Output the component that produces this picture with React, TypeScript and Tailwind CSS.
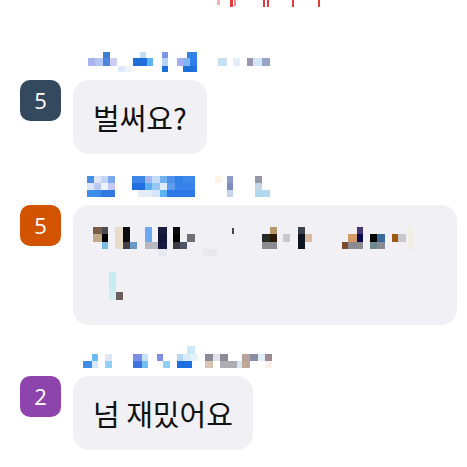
type Cell = [number, number, number, number, string];

const topMarks: Cell[] = [
  [217, 0, 3, 5, '#f3b0b0'],
  [230, 0, 3, 7, '#e03a3a'],
  [234, 0, 2, 6, '#eb8a8a'],
  [263, 0, 2, 7, '#e03a3a'],
  [267, 0, 2, 7, '#e03a3a'],
  [292, 0, 2, 7, '#e03a3a'],
  [318, 0, 2, 7, '#e03a3a'],
];

const name1: Cell[] = [
  [103, 52, 7, 6, '#3b7fd9'], [140, 52, 6, 6, '#c5dcf5'], [162, 52, 6, 6, '#7b96e6'], [187, 52, 10, 6, '#3282e8'],
  [88, 58, 7, 8, '#a9b3ee'], [95, 58, 8, 8, '#b4c6f3'], [103, 58, 7, 8, '#4f86da'], [110, 58, 7, 8, '#cdcdf3'],
  [133, 58, 14, 8, '#1f6fda'], [147, 58, 6, 8, '#5db3f2'], [162, 58, 6, 8, '#b9d3f2'], [177, 58, 6, 8, '#a3acf0'],
  [183, 58, 7, 8, '#7fb5f2'], [190, 58, 7, 8, '#2f7fea'], [218, 58, 9, 8, '#c6e0ef'], [233, 58, 7, 8, '#e2eff8'],
  [247, 58, 6, 8, '#9b97b2'], [253, 58, 9, 8, '#d4e6f6'], [262, 58, 8, 8, '#97a3c9'],
  [118, 66, 7, 6, '#dfe9fb'], [125, 66, 7, 6, '#f0f5fc'], [162, 66, 6, 6, '#1f6fda'], [183, 66, 14, 6, '#1f6fda'],
];

const name2: Cell[] = [
  [87, 176, 7, 7, '#4a90e2'], [94, 176, 7, 7, '#dfe6f7'], [101, 176, 7, 7, '#c0d4f5'], [108, 176, 7, 7, '#7aa8ea'],
  [132, 176, 13, 7, '#3f85e6'], [145, 176, 7, 7, '#a8b6ee'], [152, 176, 8, 7, '#c4dcf5'], [160, 176, 7, 7, '#6fb0f0'],
  [167, 176, 8, 7, '#4e90ea'], [175, 176, 8, 7, '#2d83ea'], [183, 176, 12, 7, '#3e8aeb'], [215, 176, 7, 7, '#fdf6e3'],
  [227, 176, 6, 7, '#8c9bc8'], [255, 176, 7, 7, '#9499a5'],
  [87, 183, 7, 7, '#dde6f7'], [94, 183, 7, 7, '#b9c9f0'], [101, 183, 7, 7, '#eef2fa'], [108, 183, 7, 7, '#c5c8f2'],
  [132, 183, 13, 7, '#2170e0'], [145, 183, 7, 7, '#5bb1f2'], [152, 183, 8, 7, '#95c8f2'], [160, 183, 7, 7, '#e0eaf8'],
  [167, 183, 8, 7, '#5e9cec'], [175, 183, 20, 7, '#3583eb'], [227, 183, 6, 7, '#7d8fbe'], [255, 183, 7, 7, '#c5d5e8'],
  [87, 190, 14, 7, '#3c8de8'], [101, 190, 14, 7, '#2f78e0'], [138, 190, 14, 7, '#e4ecf8'], [152, 190, 8, 7, '#d6e6fa'],
  [160, 190, 7, 7, '#5ab5f2'], [167, 190, 28, 7, '#2c78e6'], [227, 190, 6, 7, '#c7d5ea'], [255, 190, 15, 7, '#b0d8f0'],
];

const name3: Cell[] = [
  [187, 343, 8, 8, '#cde9f8'],
  [92, 351, 6, 7, '#6cbcf0'], [105, 351, 7, 7, '#e0e4f5'], [133, 351, 9, 7, '#7c8ee6'], [142, 351, 6, 7, '#c6e4f8'],
  [157, 351, 6, 7, '#7c8ee6'], [177, 351, 6, 7, '#b5d6f5'], [183, 351, 8, 7, '#d8ecfa'], [191, 351, 7, 7, '#e4f2fa'],
  [205, 351, 8, 7, '#8a8a98'], [213, 351, 7, 7, '#e0e2ea'], [220, 351, 8, 7, '#8d8a96'], [242, 351, 8, 7, '#b8a49c'],
  [250, 351, 8, 7, '#8c8ca8'], [258, 351, 7, 7, '#e0eefa'], [265, 351, 7, 7, '#9e8c95'],
  [83, 358, 9, 8, '#3f8de6'], [92, 358, 6, 8, '#d0e8f8'], [105, 358, 7, 8, '#8fd0f5'], [133, 358, 9, 8, '#3f75e0'],
  [142, 358, 6, 8, '#6fbff0'], [163, 358, 7, 8, '#8fd0f5'], [177, 358, 15, 8, '#1c6fe0'], [205, 358, 8, 8, '#d6c5b0'],
  [220, 358, 17, 8, '#acacb2'], [237, 358, 5, 8, '#d8e4f0'], [242, 358, 8, 8, '#c0a898'], [265, 358, 7, 8, '#fdf0ec'],
];

const blurred: Cell[] = [
  [93, 225, 9, 7, '#7a5c48'], [102, 225, 6, 7, '#4a4a50'], [115, 225, 8, 7, '#e8dccc'], [123, 225, 7, 7, '#0a0a0a'],
  [145, 225, 7, 7, '#6aa8f0'], [158, 225, 9, 7, '#1a1a3a'], [173, 225, 7, 7, '#0a0a0a'], [232, 226, 1.5, 6, '#444444'],
  [270, 225, 7, 7, '#b89868'], [298, 225, 7, 7, '#3a4048'], [357, 225, 6, 7, '#453875'], [408, 225, 5, 7, '#f0f0e0'],
  [93, 232, 9, 8, '#c2a888'], [102, 232, 6, 8, '#000000'], [115, 232, 8, 8, '#e8dccc'], [123, 232, 7, 8, '#0a0a0a'],
  [145, 232, 7, 8, '#6aa8f0'], [158, 232, 9, 8, '#141438'], [173, 232, 7, 8, '#000000'], [187, 232, 8, 8, '#707074'],
  [262, 232, 8, 8, '#2a2a2a'], [270, 232, 7, 8, '#2a1a0a'], [283, 232, 7, 8, '#c8c8cc'], [298, 232, 7, 8, '#0c1420'],
  [305, 232, 7, 8, '#d8b8a0'], [348, 232, 9, 8, '#d49a68'], [357, 232, 6, 8, '#0a0a50'], [370, 232, 7, 8, '#000000'],
  [377, 232, 8, 8, '#3a6a9a'], [392, 232, 6, 8, '#a05a10'], [398, 232, 8, 8, '#c8c8cc'], [408, 232, 5, 8, '#f0f0e0'],
  [102, 240, 6, 7, '#7abce0'], [115, 240, 8, 7, '#e8dccc'], [123, 240, 7, 7, '#404048'], [130, 240, 7, 7, '#6a98c0'],
  [145, 240, 13, 7, '#b8b8c0'], [158, 240, 9, 7, '#1a1a40'], [173, 240, 7, 7, '#3a3a40'], [180, 240, 7, 7, '#4a5868'],
  [262, 240, 15, 7, '#8c8c90'], [298, 240, 7, 7, '#0c1420'], [342, 240, 6, 7, '#7a4a2a'], [348, 240, 15, 7, '#8a8a90'],
  [370, 240, 7, 7, '#708890'], [377, 240, 8, 7, '#8a8a90'], [408, 240, 5, 7, '#f0f0e0'],
  [158, 247, 9, 7, '#e8e8f0'], [203, 247, 14, 7, '#e8e8ee'],
  [109, 270, 7, 20, '#c8ecf0'], [109, 290, 7, 8, '#d0eef0'], [116, 290, 7, 8, '#6a6060'],
];

function Mosaic({ cells, x, y, w, h }: { cells: Cell[]; x: number; y: number; w: number; h: number }) {
  return (
    <svg width={w} height={h} viewBox={`${x} ${y} ${w} ${h}`} className="block" shapeRendering="crispEdges">
      {cells.map(([cx, cy, cw, ch, fill], i) => (
        <rect key={i} x={cx} y={cy} width={cw} height={ch} fill={fill} />
      ))}
    </svg>
  );
}

function Message({
  avatar,
  color,
  name,
  nameTop,
  children,
}: {
  avatar: string;
  color: string;
  name: Cell[];
  nameTop: number;
  children: React.ReactNode;
}) {
  return (
    <div className="grid grid-cols-[41px_1fr] gap-x-3 gap-y-2">
      <div className="col-start-2">
        <Mosaic cells={name} x={73} y={nameTop} w={210} h={22} />
      </div>
      <div
        className={`col-start-1 row-start-2 w-[41px] h-[41px] rounded-[10px] flex items-center justify-center text-white text-[22px] ${color}`}
        style={{ fontFamily: '"Open Sans", sans-serif' }}
      >
        {avatar}
      </div>
      <div className="col-start-2 row-start-2 justify-self-start max-w-[384px] bg-[#f0f0f5] rounded-[16px] px-5 py-[14px] text-[29px] leading-[46px] text-[#111]">
        {children}
      </div>
    </div>
  );
}

export default function App() {
  return (
    <div
      className="w-[467px] h-[467px] bg-white overflow-hidden"
      style={{ fontFamily: '"Noto Sans CJK KR", "Noto Sans", sans-serif' }}
    >
      <Mosaic cells={topMarks} x={0} y={0} w={467} h={8} />
      <div className="mt-[42px] pl-5 pr-[10px] flex flex-col gap-[21px]">
        <Message avatar="5" color="bg-[#34495e]" name={name1} nameTop={50}>
          벌써요?
        </Message>
        <Message avatar="5" color="bg-[#d35400]" name={name2} nameTop={175}>
          <Mosaic cells={blurred} x={93} y={217} w={344} h={92} />
        </Message>
        <Message avatar="2" color="bg-[#8e44ad]" name={name3} nameTop={343}>
          넘 재밌어요
        </Message>
      </div>
    </div>
  );
}
